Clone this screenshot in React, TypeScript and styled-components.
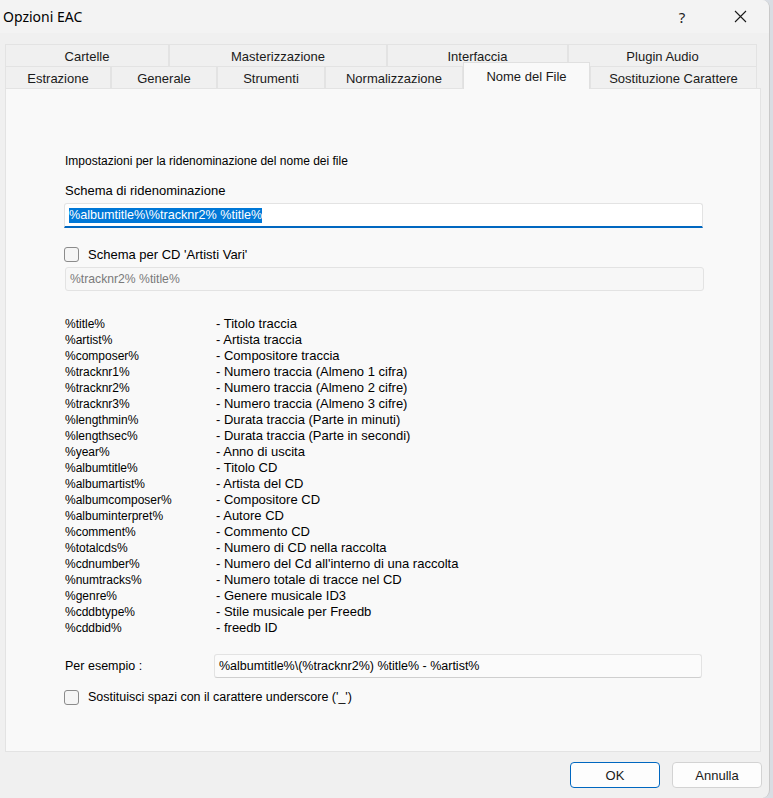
import React from "react";
import styled, { createGlobalStyle, css } from "styled-components";

const GlobalStyle = createGlobalStyle`
  html, body {
    margin: 0;
    padding: 0;
    background: #d9dde3;
  }
  body {
    font-family: "Liberation Sans", Arial, sans-serif;
    color: #000;
  }
`;

const Window = styled.div`
  width: 770px;
  height: 798px;
  background: #f0f0f0;
  border-right: 1px solid #c9c9c9;
  border-top-right-radius: 8px;
  border-bottom-right-radius: 8px;
  box-sizing: border-box;
  display: flex;
  flex-direction: column;
  overflow: hidden;
`;

const TitleBar = styled.div`
  height: 33px;
  display: flex;
  align-items: center;
  padding-left: 3px;
  background: #f3f3f3;
`;

const Title = styled.div`
  font-family: "Noto Sans", "Open Sans", sans-serif;
  font-size: 14px;
  flex: 1;
`;

const TitleButton = styled.div<{ $w: number }>`
  width: ${(p) => p.$w}px;
  height: 33px;
  display: flex;
  align-items: center;
  justify-content: center;
  font-family: "Noto Sans", sans-serif;
  font-size: 15px;
  color: #222;
`;

const Tabs = styled.div`
  margin: 11px 0 0 5px;
  width: 752px;
  display: flex;
  flex-direction: column;
  font-family: "Liberation Sans", Arial, sans-serif;
  font-size: 13px;
  position: relative;
  z-index: 1;
`;

const TabRow = styled.div<{ $cols: string }>`
  display: grid;
  grid-template-columns: ${(p) => p.$cols};
`;

const Tab = styled.div<{ $active?: boolean }>`
  height: 22px;
  box-sizing: border-box;
  border: 1px solid #e3e3e3;
  border-bottom: none;
  background: #f0f0f0;
  display: flex;
  align-items: center;
  justify-content: center;
  padding-top: 2px;
  color: #1a1a1a;
  white-space: nowrap;
  ${(p) =>
    p.$active &&
    css`
      height: 27px;
      margin-top: -4px;
      background: #f9f9f9;
      align-items: flex-start;
      padding-top: 6px;
      border-color: #e0e0e0;
      position: relative;
      z-index: 2;
      margin-bottom: -1px;
    `}
`;

const Panel = styled.div`
  margin-left: 5px;
  width: 756px;
  height: 664px;
  box-sizing: border-box;
  border: 1px solid #e3e3e3;
  background: #f9f9f9;
  padding: 64px 0 0 59px;
  font-size: 12px;
  display: flex;
  flex-direction: column;
`;

const Label = styled.div<{ $mt?: number; $size?: number }>`
  line-height: 16px;
  margin-top: ${(p) => p.$mt ?? 0}px;
  font-size: ${(p) => p.$size ?? 12}px;
  white-space: nowrap;
`;

const TextBox = styled.div<{ $variant: "focus" | "disabled" | "plain"; $w: number; $mt: number }>`
  width: ${(p) => p.$w}px;
  height: ${(p) => (p.$variant === "focus" ? 25 : 24)}px;
  margin-top: ${(p) => p.$mt}px;
  box-sizing: border-box;
  border: 1px solid #e3e3e3;
  border-radius: 3px;
  display: flex;
  align-items: center;
  padding-left: 4px;
  white-space: nowrap;
  ${(p) =>
    p.$variant === "focus" &&
    css`
      background: #fff;
      border-bottom: 2px solid #0067c0;
      border-radius: 3px 3px 0 0;
      padding-top: 1px;
      margin-left: -1px;
      font-size: 12.6px;
    `}
  ${(p) =>
    p.$variant === "disabled" &&
    css`
      background: #f7f7f7;
      color: #7a7a7a;
      font-size: 12.2px;
    `}
  ${(p) =>
    p.$variant === "plain" &&
    css`
      background: #fbfbfb;
      border-bottom-color: #cfcfcf;
      margin-left: -2px;
      font-size: 12.5px;
    `}
`;

const Selected = styled.span`
  background: #0078d7;
  color: #fff;
  line-height: 15px;
`;

const CheckRow = styled.div<{ $mt: number; $size: number }>`
  display: flex;
  align-items: center;
  gap: 9px;
  margin-top: ${(p) => p.$mt}px;
  height: 16px;
  font-size: ${(p) => p.$size}px;
`;

const CheckBox = styled.div`
  width: 15px;
  height: 15px;
  box-sizing: border-box;
  border: 1px solid #8b8b8b;
  border-radius: 3px;
  background: #f5f5f5;
  margin-left: -1px;
`;

const VarList = styled.div`
  margin-top: 25px;
  display: grid;
  grid-template-columns: 151px 1fr;
  grid-auto-rows: 16px;
  line-height: 16px;
`;

const VarName = styled.span`
  font-size: 12px;
`;

const VarDesc = styled.span`
  font-size: 13px;
  white-space: nowrap;
`;

const ExampleRow = styled.div`
  margin-top: 18px;
  display: flex;
  align-items: center;
`;

const ExampleLabel = styled.div`
  width: 151px;
  font-size: 12.5px;
`;

const Footer = styled.div`
  flex: 1;
  display: flex;
  justify-content: flex-end;
  align-items: flex-start;
  gap: 12px;
  padding: 10px 7px 0 0;
`;

const Button = styled.div<{ $primary?: boolean }>`
  width: 90px;
  height: 26px;
  box-sizing: border-box;
  border: 1px solid ${(p) => (p.$primary ? "#0067c0" : "#d3d3d3")};
  border-radius: 4px;
  background: #fdfdfd;
  display: flex;
  align-items: center;
  justify-content: center;
  font-size: 13px;
  color: #1a1a1a;
`;

const vars: [string, string][] = [
  ["%title%", "- Titolo traccia"],
  ["%artist%", "- Artista traccia"],
  ["%composer%", "- Compositore traccia"],
  ["%tracknr1%", "- Numero traccia (Almeno 1 cifra)"],
  ["%tracknr2%", "- Numero traccia (Almeno 2 cifre)"],
  ["%tracknr3%", "- Numero traccia (Almeno 3 cifre)"],
  ["%lengthmin%", "- Durata traccia (Parte in minuti)"],
  ["%lengthsec%", "- Durata traccia (Parte in secondi)"],
  ["%year%", "- Anno di uscita"],
  ["%albumtitle%", "- Titolo CD"],
  ["%albumartist%", "- Artista del CD"],
  ["%albumcomposer%", "- Compositore CD"],
  ["%albuminterpret%", "- Autore CD"],
  ["%comment%", "- Commento CD"],
  ["%totalcds%", "- Numero di CD nella raccolta"],
  ["%cdnumber%", "- Numero del Cd all'interno di una raccolta"],
  ["%numtracks%", "- Numero totale di tracce nel CD"],
  ["%genre%", "- Genere musicale ID3"],
  ["%cddbtype%", "- Stile musicale per Freedb"],
  ["%cddbid%", "- freedb ID"],
];

const row1 = ["Cartelle", "Masterizzazione", "Interfaccia", "Plugin Audio"];
const row2 = ["Estrazione", "Generale", "Strumenti", "Normalizzazione", "Nome del File", "Sostituzione Carattere"];

const CloseIcon = () => (
  <svg width="13" height="13" viewBox="0 0 13 13">
    <path d="M1 1L12 12M12 1L1 12" stroke="#1a1a1a" strokeWidth="1.1" />
  </svg>
);

export default function App() {
  return (
    <>
      <GlobalStyle />
      <Window>
        <TitleBar>
          <Title>Opzioni EAC</Title>
          <TitleButton $w={58}>?</TitleButton>
          <TitleButton $w={58}>
            <CloseIcon />
          </TitleButton>
        </TitleBar>
        <Tabs>
          <TabRow $cols="164px 218px 181px 189px">
            {row1.map((t) => (
              <Tab key={t}>{t}</Tab>
            ))}
          </TabRow>
          <TabRow $cols="106px 106px 108px 138px 127px 167px">
            {row2.map((t) => (
              <Tab key={t} $active={t === "Nome del File"}>
                {t}
              </Tab>
            ))}
          </TabRow>
        </Tabs>
        <Panel>
          <Label>Impostazioni per la ridenominazione del nome dei file</Label>
          <Label $mt={14} $size={13}>Schema di ridenominazione</Label>
          <TextBox $variant="focus" $w={639} $mt={4}>
            <Selected>%albumtitle%\%tracknr2% %title%</Selected>
          </TextBox>
          <CheckRow $mt={18} $size={13}>
            <CheckBox />
            <span>Schema per CD 'Artisti Vari'</span>
          </CheckRow>
          <TextBox $variant="disabled" $w={639} $mt={5}>
            %tracknr2% %title%
          </TextBox>
          <VarList>
            {vars.map(([k, d]) => (
              <React.Fragment key={k}>
                <VarName>{k}</VarName>
                <VarDesc>{d}</VarDesc>
              </React.Fragment>
            ))}
          </VarList>
          <ExampleRow>
            <ExampleLabel>Per esempio :</ExampleLabel>
            <TextBox $variant="plain" $w={488} $mt={0}>
              %albumtitle%\(%tracknr2%) %title% - %artist%
            </TextBox>
          </ExampleRow>
          <CheckRow $mt={11} $size={12.5}>
            <CheckBox />
            <span>Sostituisci spazi con il carattere underscore ('_')</span>
          </CheckRow>
        </Panel>
        <Footer>
          <Button $primary>OK</Button>
          <Button>Annulla</Button>
        </Footer>
      </Window>
    </>
  );
}
